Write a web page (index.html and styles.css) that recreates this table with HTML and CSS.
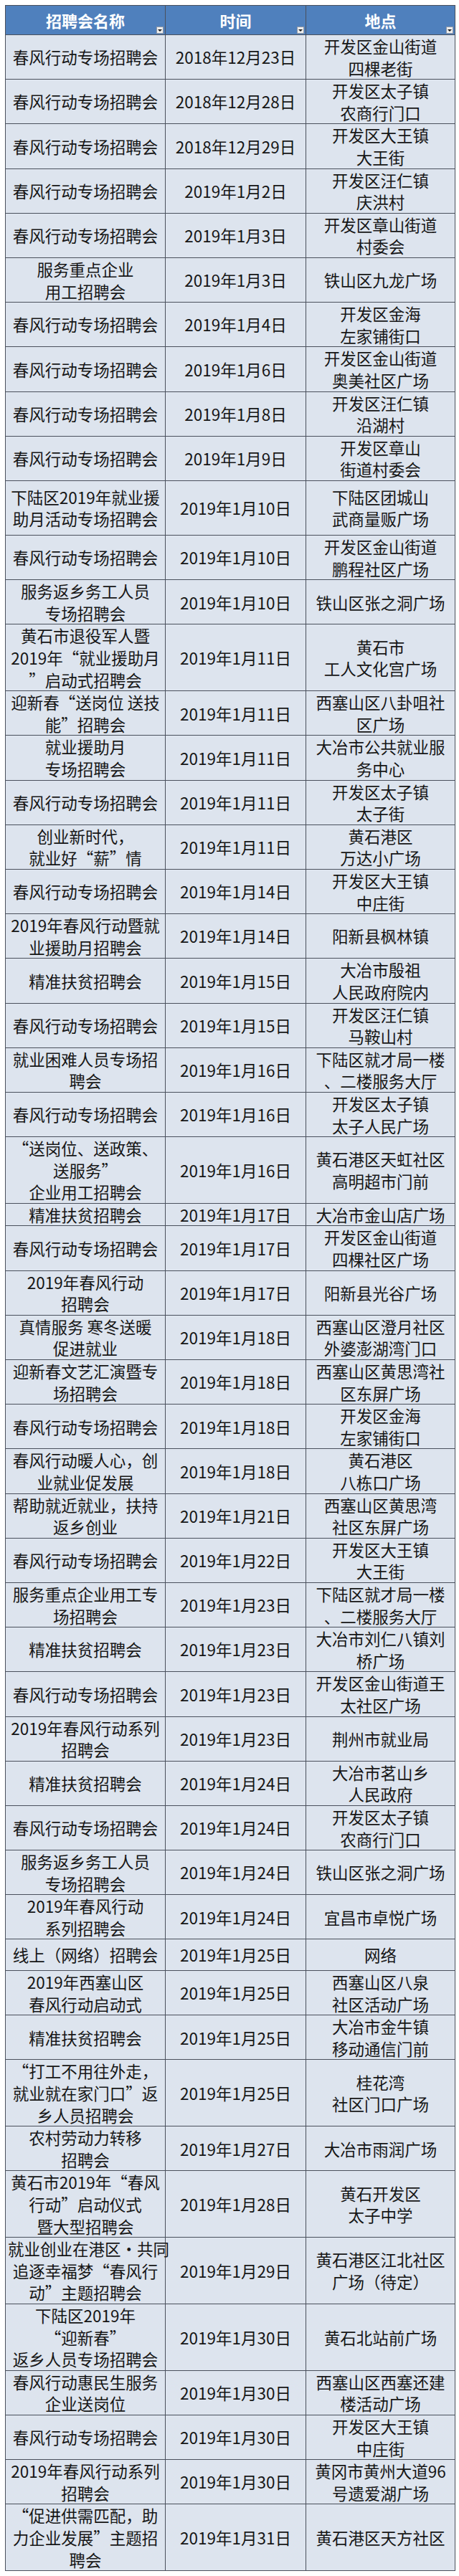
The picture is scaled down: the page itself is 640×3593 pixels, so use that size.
FILE: index.html
```html
<!DOCTYPE html>
<html lang="zh-CN">
<head>
<meta charset="utf-8">
<title>招聘会一览</title>
<link rel="stylesheet" href="styles.css">
</head>
<body>
<table class="sheet">
  <colgroup>
    <col class="col-name">
    <col class="col-date">
    <col class="col-loc">
  </colgroup>
  <thead>
    <tr class="hd">
      <th>招聘会名称<span class="filter"></span></th>
      <th>时间<span class="filter"></span></th>
      <th>地点<span class="filter"></span></th>
    </tr>
  </thead>
  <tbody>
    <tr><td>春风行动专场招聘会</td><td>2018年12月23日</td><td>开发区金山街道<br>四棵老街</td></tr>
    <tr><td>春风行动专场招聘会</td><td>2018年12月28日</td><td>开发区太子镇<br>农商行门口</td></tr>
    <tr><td>春风行动专场招聘会</td><td>2018年12月29日</td><td>开发区大王镇<br>大王街</td></tr>
    <tr><td>春风行动专场招聘会</td><td>2019年1月2日</td><td>开发区汪仁镇<br>庆洪村</td></tr>
    <tr><td>春风行动专场招聘会</td><td>2019年1月3日</td><td>开发区章山街道<br>村委会</td></tr>
    <tr><td>服务重点企业<br>用工招聘会</td><td>2019年1月3日</td><td>铁山区九龙广场</td></tr>
    <tr><td>春风行动专场招聘会</td><td>2019年1月4日</td><td>开发区金海<br>左家铺街口</td></tr>
    <tr><td>春风行动专场招聘会</td><td>2019年1月6日</td><td>开发区金山街道<br>奥美社区广场</td></tr>
    <tr><td>春风行动专场招聘会</td><td>2019年1月8日</td><td>开发区汪仁镇<br>沿湖村</td></tr>
    <tr><td>春风行动专场招聘会</td><td>2019年1月9日</td><td>开发区章山<br>街道村委会</td></tr>
    <tr class="roomy"><td>下陆区2019年就业援<br>助月活动专场招聘会</td><td>2019年1月10日</td><td>下陆区团城山<br>武商量贩广场</td></tr>
    <tr><td>春风行动专场招聘会</td><td>2019年1月10日</td><td>开发区金山街道<br>鹏程社区广场</td></tr>
    <tr><td>服务返乡务工人员<br>专场招聘会</td><td>2019年1月10日</td><td>铁山区张之洞广场</td></tr>
    <tr><td>黄石市退役军人暨<br>2019年“就业援助月<br>”启动式招聘会</td><td>2019年1月11日</td><td>黄石市<br>工人文化宫广场</td></tr>
    <tr><td>迎新春“送岗位 送技<br>能”招聘会</td><td>2019年1月11日</td><td>西塞山区八卦咀社<br>区广场</td></tr>
    <tr><td>就业援助月<br>专场招聘会</td><td>2019年1月11日</td><td>大冶市公共就业服<br>务中心</td></tr>
    <tr><td>春风行动专场招聘会</td><td>2019年1月11日</td><td>开发区太子镇<br>太子街</td></tr>
    <tr><td>创业新时代，<br>就业好“薪”情</td><td>2019年1月11日</td><td>黄石港区<br>万达小广场</td></tr>
    <tr><td>春风行动专场招聘会</td><td>2019年1月14日</td><td>开发区大王镇<br>中庄街</td></tr>
    <tr><td>2019年春风行动暨就<br>业援助月招聘会</td><td>2019年1月14日</td><td>阳新县枫林镇</td></tr>
    <tr><td>精准扶贫招聘会</td><td>2019年1月15日</td><td>大冶市殷祖<br>人民政府院内</td></tr>
    <tr><td>春风行动专场招聘会</td><td>2019年1月15日</td><td>开发区汪仁镇<br>马鞍山村</td></tr>
    <tr><td>就业困难人员专场招<br>聘会</td><td>2019年1月16日</td><td>下陆区就才局一楼<br>、二楼服务大厅</td></tr>
    <tr><td>春风行动专场招聘会</td><td>2019年1月16日</td><td>开发区太子镇<br>太子人民广场</td></tr>
    <tr><td>“送岗位、送政策、<br>送服务”<br>企业用工招聘会</td><td>2019年1月16日</td><td>黄石港区天虹社区<br>高明超市门前</td></tr>
    <tr><td>精准扶贫招聘会</td><td>2019年1月17日</td><td>大冶市金山店广场</td></tr>
    <tr><td>春风行动专场招聘会</td><td>2019年1月17日</td><td>开发区金山街道<br>四棵社区广场</td></tr>
    <tr><td>2019年春风行动<br>招聘会</td><td>2019年1月17日</td><td>阳新县光谷广场</td></tr>
    <tr><td>真情服务 寒冬送暖<br>促进就业</td><td>2019年1月18日</td><td>西塞山区澄月社区<br>外婆澎湖湾门口</td></tr>
    <tr><td>迎新春文艺汇演暨专<br>场招聘会</td><td>2019年1月18日</td><td>西塞山区黄思湾社<br>区东屏广场</td></tr>
    <tr><td>春风行动专场招聘会</td><td>2019年1月18日</td><td>开发区金海<br>左家铺街口</td></tr>
    <tr><td>春风行动暖人心，创<br>业就业促发展</td><td>2019年1月18日</td><td>黄石港区<br>八栋口广场</td></tr>
    <tr><td>帮助就近就业，扶持<br>返乡创业</td><td>2019年1月21日</td><td>西塞山区黄思湾<br>社区东屏广场</td></tr>
    <tr><td>春风行动专场招聘会</td><td>2019年1月22日</td><td>开发区大王镇<br>大王街</td></tr>
    <tr><td>服务重点企业用工专<br>场招聘会</td><td>2019年1月23日</td><td>下陆区就才局一楼<br>、二楼服务大厅</td></tr>
    <tr><td>精准扶贫招聘会</td><td>2019年1月23日</td><td>大冶市刘仁八镇刘<br>桥广场</td></tr>
    <tr><td>春风行动专场招聘会</td><td>2019年1月23日</td><td>开发区金山街道王<br>太社区广场</td></tr>
    <tr><td>2019年春风行动系列<br>招聘会</td><td>2019年1月23日</td><td>荆州市就业局</td></tr>
    <tr><td>精准扶贫招聘会</td><td>2019年1月24日</td><td>大冶市茗山乡<br>人民政府</td></tr>
    <tr><td>春风行动专场招聘会</td><td>2019年1月24日</td><td>开发区太子镇<br>农商行门口</td></tr>
    <tr><td>服务返乡务工人员<br>专场招聘会</td><td>2019年1月24日</td><td>铁山区张之洞广场</td></tr>
    <tr><td>2019年春风行动<br>系列招聘会</td><td>2019年1月24日</td><td>宜昌市卓悦广场</td></tr>
    <tr class="roomy-1"><td>线上（网络）招聘会</td><td>2019年1月25日</td><td>网络</td></tr>
    <tr><td>2019年西塞山区<br>春风行动启动式</td><td>2019年1月25日</td><td>西塞山区八泉<br>社区活动广场</td></tr>
    <tr><td>精准扶贫招聘会</td><td>2019年1月25日</td><td>大冶市金牛镇<br>移动通信门前</td></tr>
    <tr><td>“打工不用往外走，<br>就业就在家门口”返<br>乡人员招聘会</td><td>2019年1月25日</td><td>桂花湾<br>社区门口广场</td></tr>
    <tr><td>农村劳动力转移<br>招聘会</td><td>2019年1月27日</td><td>大冶市雨润广场</td></tr>
    <tr><td>黄石市2019年“春风<br>行动”启动仪式<br>暨大型招聘会</td><td>2019年1月28日</td><td>黄石开发区<br>太子中学</td></tr>
    <tr><td>就业创业在港区·共同<br>追逐幸福梦“春风行<br>动”主题招聘会</td><td>2019年1月29日</td><td>黄石港区江北社区<br>广场（待定）</td></tr>
    <tr><td>下陆区2019年<br>“迎新春”<br>返乡人员专场招聘会</td><td>2019年1月30日</td><td>黄石北站前广场</td></tr>
    <tr><td>春风行动惠民生服务<br>企业送岗位</td><td>2019年1月30日</td><td>西塞山区西塞还建<br>楼活动广场</td></tr>
    <tr><td>春风行动专场招聘会</td><td>2019年1月30日</td><td>开发区大王镇<br>中庄街</td></tr>
    <tr><td>2019年春风行动系列<br>招聘会</td><td>2019年1月30日</td><td>黄冈市黄州大道96<br>号遗爱湖广场</td></tr>
    <tr><td>“促进供需匹配，助<br>力企业发展”主题招<br>聘会</td><td>2019年1月31日</td><td>黄石港区天方社区</td></tr>
  </tbody>
</table>
</body>
</html>
```

FILE: styles.css
```css
html, body {
  margin: 0;
  padding: 0;
  background: #ffffff;
}

body {
  padding: 7px 0 0 7px;
  font-family: "Noto Sans CJK SC", "Noto Sans", "Liberation Sans", sans-serif;
  color: #161616;
}

.sheet {
  width: 627px;
  border-collapse: collapse;
  table-layout: fixed;
  border: 1px solid #4a505c;
}

.col-name { width: 223px; }
.col-date { width: 196px; }
.col-loc  { width: 208px; }

.sheet th,
.sheet td {
  border: 1px solid #4a505c;
  text-align: center;
  vertical-align: middle;
  white-space: nowrap;
  overflow: visible;
}

.hd th {
  position: relative;
  height: 40px;
  padding: 0 4px;
  background: #4f80bd;
  color: #ffffff;
  font-size: 22px;
  font-weight: 700;
  line-height: 40px;
}

.filter {
  position: absolute;
  right: 2px;
  bottom: 1px;
  width: 10px;
  height: 10px;
  background: #eeeeee;
  border: 1px solid #8f98a6;
  box-sizing: border-box;
}

.filter::after {
  content: "";
  position: absolute;
  left: 1px;
  top: 3px;
  border-left: 3px solid transparent;
  border-right: 3px solid transparent;
  border-top: 3px solid #1a1a1a;
}

.sheet td {
  padding: 0 3px;
  background: #dde4ee;
  font-size: 22.5px;
  line-height: 30.6px;
}

.roomy td {
  padding-top: 7px;
  padding-bottom: 7px;
}

.roomy-1 td {
  padding-top: 6px;
  padding-bottom: 6px;
}
```
